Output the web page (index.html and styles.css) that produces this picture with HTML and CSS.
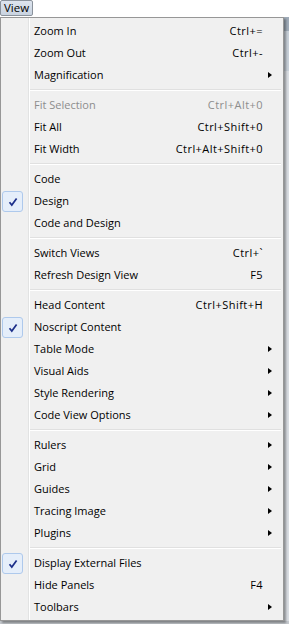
FILE: index.html
```html
<!DOCTYPE html>
<html>
<head>
<meta charset="utf-8">
<link rel="stylesheet" href="styles.css">
</head>
<body>
<div class="screen">
  <div class="menubar"><span class="menu-btn">View</span></div>
  <div class="stage">
    <ul class="menu">
      <li class="item"><span class="check"></span><span class="label">Zoom In</span><span class="key">Ctrl+=</span><span class="sub"></span></li>
      <li class="item"><span class="check"></span><span class="label">Zoom Out</span><span class="key">Ctrl+-</span><span class="sub"></span></li>
      <li class="item"><span class="check"></span><span class="label">Magnification</span><span class="key"></span><span class="sub"><i class="arrow"></i></span></li>
      <li class="sep"></li>
      <li class="item disabled"><span class="check"></span><span class="label">Fit Selection</span><span class="key">Ctrl+Alt+0</span><span class="sub"></span></li>
      <li class="item"><span class="check"></span><span class="label">Fit All</span><span class="key">Ctrl+Shift+0</span><span class="sub"></span></li>
      <li class="item"><span class="check"></span><span class="label">Fit Width</span><span class="key">Ctrl+Alt+Shift+0</span><span class="sub"></span></li>
      <li class="sep"></li>
      <li class="item"><span class="check"></span><span class="label">Code</span><span class="key"></span><span class="sub"></span></li>
      <li class="item"><span class="check on"><svg viewBox="0 0 10 10" width="10" height="10"><path d="M1.5 5.2 L3.8 8 L8.6 1.4" fill="none" stroke="#1c2f8a" stroke-width="1.7"/></svg></span><span class="label">Design</span><span class="key"></span><span class="sub"></span></li>
      <li class="item"><span class="check"></span><span class="label">Code and Design</span><span class="key"></span><span class="sub"></span></li>
      <li class="sep"></li>
      <li class="item"><span class="check"></span><span class="label">Switch Views</span><span class="key">Ctrl+`</span><span class="sub"></span></li>
      <li class="item"><span class="check"></span><span class="label">Refresh Design View</span><span class="key">F5</span><span class="sub"></span></li>
      <li class="sep"></li>
      <li class="item"><span class="check"></span><span class="label">Head Content</span><span class="key">Ctrl+Shift+H</span><span class="sub"></span></li>
      <li class="item"><span class="check on"><svg viewBox="0 0 10 10" width="10" height="10"><path d="M1.5 5.2 L3.8 8 L8.6 1.4" fill="none" stroke="#1c2f8a" stroke-width="1.7"/></svg></span><span class="label">Noscript Content</span><span class="key"></span><span class="sub"></span></li>
      <li class="item"><span class="check"></span><span class="label">Table Mode</span><span class="key"></span><span class="sub"><i class="arrow"></i></span></li>
      <li class="item"><span class="check"></span><span class="label">Visual Aids</span><span class="key"></span><span class="sub"><i class="arrow"></i></span></li>
      <li class="item"><span class="check"></span><span class="label">Style Rendering</span><span class="key"></span><span class="sub"><i class="arrow"></i></span></li>
      <li class="item"><span class="check"></span><span class="label">Code View Options</span><span class="key"></span><span class="sub"><i class="arrow"></i></span></li>
      <li class="sep"></li>
      <li class="item"><span class="check"></span><span class="label">Rulers</span><span class="key"></span><span class="sub"><i class="arrow"></i></span></li>
      <li class="item"><span class="check"></span><span class="label">Grid</span><span class="key"></span><span class="sub"><i class="arrow"></i></span></li>
      <li class="item"><span class="check"></span><span class="label">Guides</span><span class="key"></span><span class="sub"><i class="arrow"></i></span></li>
      <li class="item"><span class="check"></span><span class="label">Tracing Image</span><span class="key"></span><span class="sub"><i class="arrow"></i></span></li>
      <li class="item"><span class="check"></span><span class="label">Plugins</span><span class="key"></span><span class="sub"><i class="arrow"></i></span></li>
      <li class="sep"></li>
      <li class="item"><span class="check on"><svg viewBox="0 0 10 10" width="10" height="10"><path d="M1.5 5.2 L3.8 8 L8.6 1.4" fill="none" stroke="#1c2f8a" stroke-width="1.7"/></svg></span><span class="label">Display External Files</span><span class="key"></span><span class="sub"></span></li>
      <li class="item"><span class="check"></span><span class="label">Hide Panels</span><span class="key">F4</span><span class="sub"></span></li>
      <li class="item"><span class="check"></span><span class="label">Toolbars</span><span class="key"></span><span class="sub"><i class="arrow"></i></span></li>
    </ul>
    <div class="app-edge">
      <div class="edge-a"></div>
      <div class="edge-b"></div>
      <div class="edge-c"></div>
    </div>
  </div>
  <div class="bottom-edge"></div>
</div>
</body>
</html>
```

FILE: styles.css
```css
* { box-sizing: border-box; }
html, body { margin: 0; padding: 0; background: #ffffff; }
body { font-family: "Open Sans", "Noto Sans", sans-serif; font-size: 11px; color: #000; }

.screen { width: 289px; height: 624px; overflow: hidden; display: flex; flex-direction: column; }

.menubar { height: 17px; display: flex; align-items: flex-start; }
.menu-btn {
  display: flex; align-items: center;
  height: 16px; padding: 0 3px 0 3px;
  background: linear-gradient(#dde4ee, #c9d3e0);
  border: 1px solid #8a929c; border-radius: 2px;
  font-size: 11.5px; line-height: 14px; color: #000;
}

.stage { display: flex; flex: 0 0 auto; }

.menu {
  list-style: none; margin: 0; padding: 2px 0 2px 0;
  width: 284px;
  background-color: #f0f0f0;
  background-image: linear-gradient(90deg, transparent 27px, #e2e3e3 27px, #e2e3e3 28px, #ffffff 28px, #ffffff 29px, transparent 29px);
  border: 1px solid #979797;
  box-shadow: 2px 2px 2px rgba(0,0,0,0.35);
  position: relative; z-index: 2;
}

.item {
  display: grid;
  grid-template-columns: 27px 1fr auto 20px;
  align-items: center;
  height: 22px;
  padding-left: 1px;
  line-height: 20px;
  padding-bottom: 1px;
}
.item .label { padding-left: 5px; white-space: nowrap; }
.item .key { white-space: nowrap; text-align: right; letter-spacing: 0.45px; }
.item.disabled { color: #8d8d8d; }

.check { display: flex; align-items: center; justify-content: center; width: 21px; height: 21px; margin-top: 1px; }
.check.on {
  background: #e5eefa;
  border: 1px solid #aec9ec;
  border-radius: 3px;
}

.sub { display: flex; align-items: center; padding-left: 5px; }
.arrow {
  width: 0; height: 0;
  border-top: 3.5px solid transparent;
  border-bottom: 3.5px solid transparent;
  border-left: 4px solid #000;
}

.sep { height: 8px; padding: 3px 2px 0 29px; }
.sep::before { content: ""; display: block; height: 1px; background: #e0e0e0; border-bottom: 1px solid #ffffff; box-sizing: content-box; }

.app-edge { flex: 1; display: flex; flex-direction: column; }
.edge-a { height: 14px; background: #9fabb8; }
.edge-b { height: 40px; background: #c7cfd8; }
.edge-c { flex: 1; background: #d9dde2; }

.bottom-edge { flex: 1; background: #c4c8cd; }
```
